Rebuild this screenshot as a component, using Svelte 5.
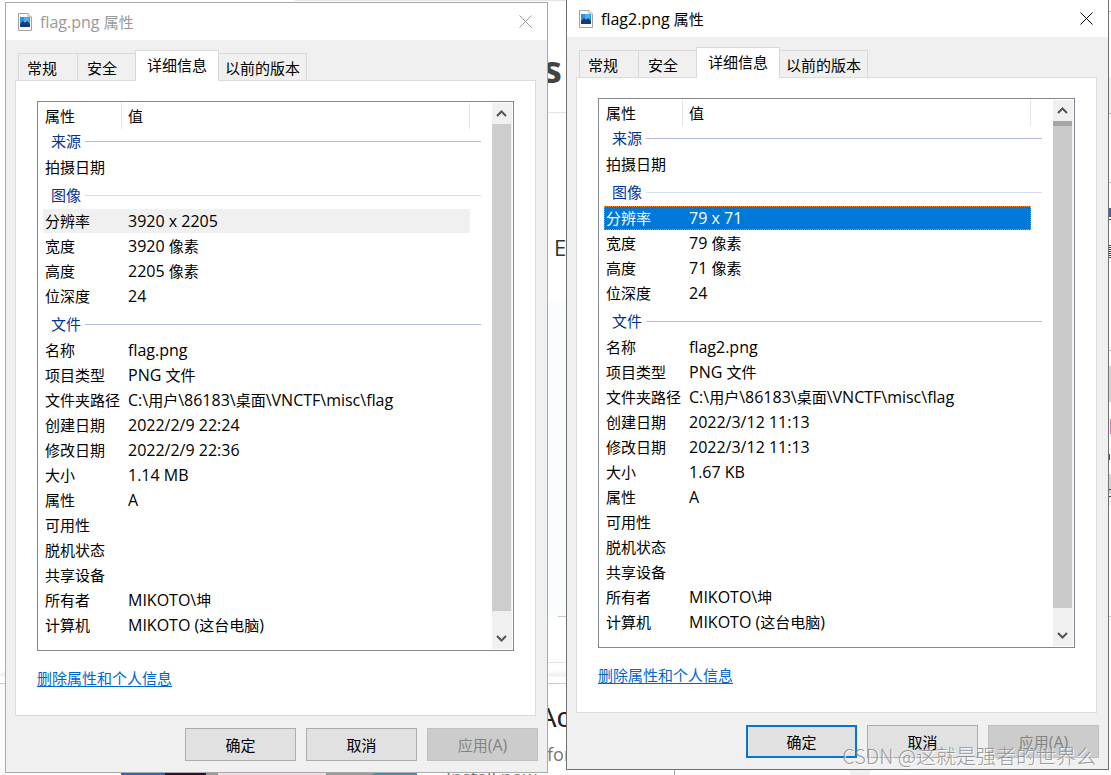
<script lang="ts">
  type Row = [label: string, value: string];
  type Group = { name: string; rows: Row[] };
  type Dialog = {
    id: string;
    file: string;
    active: boolean;
    groups: Group[];
  };

  function fileGroups(file: string, size: string, created: string, modified: string, bytes: string): Group[] {
    const [w, h] = size.split(" x ");
    return [
      { name: "来源", rows: [["拍摄日期", ""]] },
      {
        name: "图像",
        rows: [
          ["分辨率", size],
          ["宽度", `${w} 像素`],
          ["高度", `${h} 像素`],
          ["位深度", "24"],
        ],
      },
      {
        name: "文件",
        rows: [
          ["名称", file],
          ["项目类型", "PNG 文件"],
          ["文件夹路径", "C:\\用户\\86183\\桌面\\VNCTF\\misc\\flag"],
          ["创建日期", created],
          ["修改日期", modified],
          ["大小", bytes],
          ["属性", "A"],
          ["可用性", ""],
          ["脱机状态", ""],
          ["共享设备", ""],
          ["所有者", "MIKOTO\\坤"],
          ["计算机", "MIKOTO (这台电脑)"],
        ],
      },
    ];
  }

  const dialogs: Dialog[] = [
    {
      id: "first",
      file: "flag.png",
      active: false,
      groups: fileGroups("flag.png", "3920 x 2205", "2022/2/9 22:24", "2022/2/9 22:36", "1.14 MB"),
    },
    {
      id: "second",
      file: "flag2.png",
      active: true,
      groups: fileGroups("flag2.png", "79 x 71", "2022/3/12 11:13", "2022/3/12 11:13", "1.67 KB"),
    },
  ];

  const tabs = ["常规", "安全", "详细信息", "以前的版本"];

  let selected = $state("分辨率");

  // latin runs are set one size larger than the chinese ones
  function runs(text: string) {
    return text.match(/[\u4e00-\u9fff]+|[^\u4e00-\u9fff]+/g) ?? [];
  }
</script>

{#snippet mixed(text: string)}{#each runs(text) as run}{#if /[\u4e00-\u9fff]/.test(run)}{run}{:else}<span class="latin">{run}</span>{/if}{/each}{/snippet}

<div class="desktop">
  <div class="page" aria-hidden="true">
    <div class="block tinted"></div>
    <div class="block lower"></div>
    <div class="rule r1"></div>
    <div class="rule r2"></div>
    <div class="rule r3"></div>
    <div class="rule r4"></div>
    <div class="bar"></div>
    <span class="scrap heading">s</span>
    <span class="scrap letter">E</span>
    <span class="scrap name">Ac</span>
    <span class="scrap for">for</span>
    <span class="scrap install">Install now</span>
    <div class="thumbs"></div>
    <div class="foot"></div>
    <svg class="edge" width="2" height="775" viewBox="0 0 2 775">
      <path fill="#f0f0f0" d="M0 77h2v36H0zM0 492h2v13H0z" />
      <path fill="#d6d6d6" d="M0 366h2v36H0zM0 474h2v20H0z" />
      <path fill="#b5b5b5" d="M0 11h2v1H0zM0 113h2v1H0zM0 182h2v1H0zM0 350h2v1H0z" />
      <path fill="#3c62ae" d="M0 208h2v9H0z" />
      <path fill="#444" d="M0 219h2v1H0zM0 245h2v1H0zM0 247h2v1H0zM0 249h2v1H0zM0 251h2v1H0zM0 253h2v1H0zM0 255h2v1H0zM0 257h2v1H0zM0 489h2v1H0zM0 496h2v1H0z" />
      <path fill="#c884b4" d="M1 419h1v15H1z" />
      <path fill="#4b5964" d="M0 454h1v6H0z" />
    </svg>
  </div>

  {#each dialogs as dialog (dialog.id)}
    <section class="window" class:active={dialog.active} aria-label="{dialog.file} 属性">
      <header class="titlebar">
        <svg class="file-icon" width="14" height="18" viewBox="0 0 14 18">
          <path d="M.5.5H10L13.5 4v13.5H.5z" fill="#fafafa" stroke="#a3a3a3" />
          <path d="M10 .5V4h3.5" fill="#e8e8e8" stroke="#b5b5b5" />
          <rect x="2" y="4" width="10" height="10" fill="#2a93dc" />
          <rect x="6" y="4" width="5" height="5" fill="#45b4ec" />
          <path d="M2 11l3-3 2 2 2-2 3 3v3H2z" fill="#163a78" />
        </svg>
        <h1>{@render mixed(`${dialog.file} 属性`)}</h1>
        <button class="close" aria-label="关闭">
          <svg width="13" height="13" viewBox="0 0 13 13">
            <path d="M.5.5l12 12M12.5.5l-12 12" fill="none" stroke="currentColor" />
          </svg>
        </button>
      </header>

      <div class="tabs" role="tablist">
        {#each tabs as tab}
          <button class="tab" role="tab" aria-selected={tab === "详细信息"}>{tab}</button>
        {/each}
      </div>

      <div class="panel">
        <div class="list">
          <table>
            <thead>
              <tr>
                <th scope="col">属性</th>
                <th scope="col">值</th>
              </tr>
            </thead>
            {#each dialog.groups as group}
              <tbody>
                <tr class="group">
                  <th colspan="2" scope="rowgroup">{group.name}</th>
                </tr>
                {#each group.rows as [label, value]}
                  <tr class:selected={label === selected} onclick={() => (selected = label)}>
                    <th scope="row">{label}</th>
                    <td>{@render mixed(value)}</td>
                  </tr>
                {/each}
              </tbody>
            {/each}
          </table>
          <div class="scrollbar">
            <button class="up" aria-label="向上滚动">
              <svg width="11" height="7" viewBox="0 0 11 7">
                <path d="M1 6l4.5-4.5L10 6" fill="none" stroke="#555" stroke-width="2" />
              </svg>
            </button>
            <div class="thumb"></div>
            <button class="down" aria-label="向下滚动">
              <svg width="11" height="7" viewBox="0 0 11 7">
                <path d="M1 1l4.5 4.5L10 1" fill="none" stroke="#555" stroke-width="2" />
              </svg>
            </button>
          </div>
        </div>
        <a href="#remove">删除属性和个人信息</a>
      </div>

      <footer>
        <button class="action" class:default={dialog.active}>确定</button>
        <button class="action">取消</button>
        <button class="action" disabled>{@render mixed("应用(A)")}</button>
      </footer>
    </section>
  {/each}

  <p class="watermark">CSDN @这就是强者的世界么</p>
</div>

<style>
  :global(body) {
    margin: 0;
    background: #fff;
  }

  .desktop {
    position: relative;
    display: grid;
    grid-template-columns: 1fr 1fr;
    align-items: start;
    gap: 18px;
    box-sizing: border-box;
    min-height: 100vh;
    padding: 0 2px 2px 5px;
    overflow: hidden;
    color: #000;
    font: 15px/20px "Open Sans", "Noto Sans CJK SC", sans-serif;
  }

  button {
    padding: 0;
    border: 0;
    background: none;
    color: inherit;
    font: inherit;
  }

  .latin {
    font-size: 16px;
    line-height: 16px;
    white-space: pre;
  }

  /* web page that shows between the windows */
  .page {
    position: absolute;
    inset: 0;
    overflow: hidden;
  }

  .page > * {
    position: absolute;
  }

  .block {
    left: 0;
    right: 0;
  }

  .tinted {
    left: 50%;
    right: 50%;
    margin: 0 -16px;
    top: 301px;
    height: 316px;
    background: #fafdfd;
  }

  .lower {
    top: 684px;
    height: 91px;
    right: 545px;
    background: linear-gradient(90deg, #fafafa 120px, #fff 120px);
  }

  .rule {
    left: 0;
    width: 566px;
    height: 1px;
    background: #e4e4e4;
  }

  .r1 { top: 0; left: 295px; }
  .r2 { top: 112px; left: 540px; }
  .r3 { top: 616px; left: 558px; background: #ccc; }
  .r4 { top: 662px; left: 540px; }

  .bar {
    top: 670px;
    left: 0;
    width: 566px;
    height: 14px;
    box-sizing: border-box;
    border-bottom: 1px solid #ccc;
    background: linear-gradient(#fff, #eee 6px, #fff 7px);
  }

  .scrap {
    white-space: nowrap;
  }

  .heading {
    top: 48px;
    left: 543px;
    color: #444;
    font-size: 38px;
    font-weight: 700;
    line-height: 40px;
  }

  .letter {
    top: 235px;
    left: 554px;
    color: #333;
    font-size: 22px;
    line-height: 24px;
  }

  .name {
    top: 702px;
    left: 538px;
    color: #222;
    font: 28px/32px "Liberation Sans", sans-serif;
  }

  .for {
    top: 742px;
    left: 547px;
    color: #777;
    font-size: 18px;
    line-height: 24px;
  }

  .install {
    top: 767px;
    left: 446px;
    color: #777;
    font-size: 18px;
    line-height: 20px;
  }

  .thumbs {
    top: 770px;
    left: 121px;
    width: 296px;
    height: 5px;
    background: linear-gradient(90deg, #3560c0 44px, #2b1034 44px 85px, #999 85px 97px, #f3dfe2 97px 205px, #999 205px 250px, #3c94b4 255px);
  }

  .foot {
    bottom: 0;
    left: 674px;
    width: 196px;
    height: 5px;
    box-sizing: border-box;
    border-left: 1px solid #aaa;
    background: linear-gradient(90deg, #fff 175px, #f0f0f0 175px);
  }

  .edge {
    top: 0;
    right: 0;
  }

  .window {
    position: relative;
    min-width: 0;
    margin-top: 2px;
    border: 1px solid #aaa;
    background: #f0f0f0;
  }

  .window.active {
    margin-top: -1px;
    border-color: #707070;
  }

  .titlebar {
    display: flex;
    align-items: center;
    height: 37px;
    padding: 0 15px 0 12px;
    background: #fff;
    color: #999;
  }

  .active .titlebar {
    color: #000;
  }

  h1 {
    flex: 1;
    margin: 0 0 0 8px;
    font-size: 15px;
    font-weight: 400;
  }

  .close {
    display: flex;
  }

  .tabs {
    display: flex;
    align-items: flex-end;
    height: 40px;
    padding-left: 12px;
  }

  .tab {
    box-sizing: border-box;
    height: 27px;
    padding: 1px 0 0 9px;
    border: 1px solid #d9d9d9;
    border-bottom: 0;
    text-align: left;
    white-space: nowrap;
  }

  .tab:nth-child(1) {
    width: 60px;
    padding-left: 8px;
  }

  .tab:nth-child(2) {
    width: 57px;
    border-width: 1px 0 0;
  }

  .tab:nth-child(4) {
    padding: 1px 6px 0;
    border-left: 0;
  }

  .tab[aria-selected="true"] {
    position: relative;
    height: 31px;
    margin-bottom: -1px;
    padding: 0 11px 2px;
    background: #fff;
  }

  .panel {
    margin: 0 11px 0 9px;
    padding: 20px 21px 27px;
    border: 1px solid #dcdcdc;
    background: #fff;
  }

  .list {
    display: flex;
    margin-bottom: 17px;
    border: 1px solid #828790;
  }

  table {
    display: block;
    flex: 1;
    min-width: 0;
    padding: 0 11px 12px 5px;
  }

  thead,
  tbody {
    display: block;
  }

  tr {
    display: flex;
    align-items: center;
    box-sizing: border-box;
    height: 24px;
    margin: 0 11px 1px 0;
  }

  th,
  td {
    height: 20px;
    padding: 0;
    font-weight: 400;
    text-align: left;
    white-space: nowrap;
  }

  tr > th:first-child {
    box-sizing: border-box;
    width: 85px;
    padding-left: 2px;
  }

  thead tr {
    position: relative;
    margin-bottom: 0;
    padding-top: 4px;
  }

  thead tr::before,
  thead tr::after {
    content: "";
    position: absolute;
    top: 1px;
    left: 78px;
    width: 1px;
    height: 26px;
    background: #e5e5e5;
  }

  thead tr::after {
    right: 0;
    left: auto;
  }

  tr.group {
    height: 29px;
    margin: 0;
    padding-top: 1px;
  }

  tr.group > th:first-child {
    display: flex;
    align-items: center;
    gap: 4px;
    width: 100%;
    padding-left: 8px;
    color: #003399;
  }

  .group > th::after {
    content: "";
    flex: 1;
    height: 1px;
    background: #b0bfe0;
  }

  tbody:nth-of-type(2) .group > th::after {
    background: #d7dff0;
  }

  .selected {
    background: #f0f0f0;
  }

  .active .selected {
    outline: 1px dotted #f28a28;
    outline-offset: -1px;
    background: #0078d7;
    color: #fff;
  }

  .scrollbar {
    display: flex;
    flex-direction: column;
    width: 20px;
    margin: 1px 1px 1px 0;
    background: #f0f0f0;
  }

  .scrollbar button {
    display: flex;
    align-items: center;
    justify-content: center;
    width: 19px;
    height: 21px;
  }

  .scrollbar .down {
    height: 38px;
    padding-top: 16px;
    box-sizing: border-box;
  }

  .thumb {
    flex: 1;
    width: 19px;
    background: #cdcdcd;
  }

  .active .thumb {
    border-top: 5px solid #a6a6a6;
    background: #cacaca;
  }

  a {
    color: #0066cc;
    text-underline-offset: 2px;
  }

  footer {
    display: flex;
    justify-content: flex-end;
    gap: 10px;
    padding: 12px 9px 11px;
  }

  .action {
    box-sizing: border-box;
    width: 111px;
    height: 33px;
    border: 1px solid #adadad;
    background: #e1e1e1;
  }

  .action.default {
    border: 2px solid #0078d7;
  }

  .action:disabled {
    border-color: #bfbfbf;
    background: #ccc;
    color: #838383;
  }

  .watermark {
    position: absolute;
    right: 15px;
    bottom: 6px;
    margin: 0;
    color: rgba(130, 130, 130, 0.8);
    font: 300 20px/26px "Noto Sans CJK SC", sans-serif;
    text-shadow: 1px 1px 1px #fff;
    white-space: nowrap;
  }
</style>
